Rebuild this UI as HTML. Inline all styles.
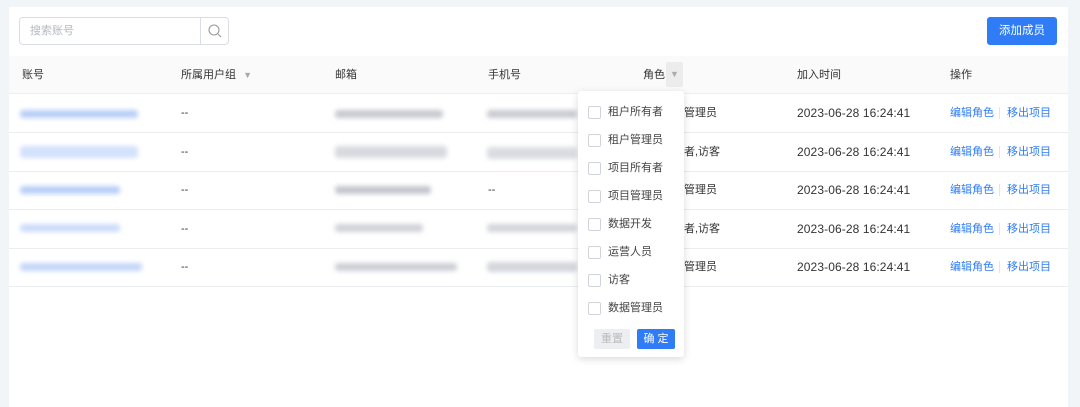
<!DOCTYPE html><html><head><meta charset="utf-8"><style>
*{margin:0;padding:0;box-sizing:border-box}
body{width:1080px;height:403px;background:#f2f5f8;font-family:"Liberation Sans","Noto Sans CJK SC",sans-serif;font-size:12px;color:#333;position:relative;overflow:hidden;line-height:16px}
.panel{position:absolute;left:9px;top:7px;width:1059px;height:400px;background:#fff}
.a{position:absolute}
.search{left:19px;top:17px;width:210px;height:28px;border:1px solid #d9dce3;border-radius:4px;color:#b5b8c0;padding:5px 10px;font-size:11px}
.search i{position:absolute;right:0;top:0;width:28px;height:26px;border-left:1px solid #d9dce3}
.btn{left:987px;top:17px;width:70px;height:28px;background:#2f7cf6;border-radius:3px;color:#fff;text-align:center;line-height:28px;font-size:11.5px}
.head{left:9px;top:56px;width:1059px;height:38px;background:#fafafa;border-bottom:1px solid #eee}
.h{position:absolute;top:67px;color:#333;font-size:11px;line-height:16px}
.row{left:9px;width:1059px;height:39px;border-bottom:1px solid #ebedf0}
.t{position:absolute;font-size:11px;color:#333;line-height:16px;white-space:nowrap}
.tm{font-size:12px;letter-spacing:0.1px}
.l{color:#2f7cf6}
.sep{position:absolute;width:1px;height:12px;background:#e3e5e8}
.bl{position:absolute;height:8px;filter:blur(2.5px);border-radius:3px}
.dd{left:578px;top:91px;width:106px;height:266px;background:#fff;box-shadow:0 2px 8px rgba(0,0,0,.15);border-radius:3px}
.cb{position:absolute;left:10px;width:13px;height:13px;border:1px solid #d0d3d9;border-radius:2px}
.ct{position:absolute;left:30px;font-size:11px;color:#444;line-height:14px}
</style></head><body>
<div class="panel"></div>
<div class="a search">搜索账号<i><svg width="28" height="26"><circle cx="13" cy="12" r="5" fill="none" stroke="#999" stroke-width="1.1"/><path d="M17 16l3 3" stroke="#999" stroke-width="1.1"/></svg></i></div>
<div class="a btn">添加成员</div>
<div class="a head"></div>
<div class="h" style="left:22px">账号</div>
<div class="h" style="left:181px">所属用户组 <span style="color:#aaa;font-size:9px;margin-left:4px">▼</span></div>
<div class="h" style="left:335px">邮箱</div>
<div class="h" style="left:488px">手机号</div>
<div class="h" style="left:643px">角色</div>
<div class="a" style="left:666px;top:62px;width:17px;height:25px;background:#ececec;border-radius:2px;color:#aaa;font-size:9px;text-align:center;line-height:25px">▼</div>
<div class="h" style="left:797px">加入时间</div>
<div class="h" style="left:950px">操作</div>

<div class="a row" style="top:94px"></div><div class="a row" style="top:133px"></div><div class="a row" style="top:171px"></div><div class="a row" style="top:210px"></div><div class="a row" style="top:248px"></div>

<div class="bl" style="left:20px;top:110px;width:118px;background:#b8cff8"></div>
<div class="bl" style="left:20px;top:146px;width:118px;height:12px;background:#d3e1fb"></div>
<div class="bl" style="left:20px;top:186px;width:100px;background:#b8cff8"></div>
<div class="bl" style="left:20px;top:224px;width:100px;background:#ccdcfa"></div>
<div class="bl" style="left:20px;top:263px;width:122px;background:#c3d6f9"></div>

<div class="t" style="left:181px;top:105px">--</div><div class="t" style="left:181px;top:144px">--</div><div class="t" style="left:181px;top:182px">--</div><div class="t" style="left:181px;top:221px">--</div><div class="t" style="left:181px;top:259px">--</div>

<div class="bl" style="left:335px;top:110px;width:108px;background:#c7c9d0"></div>
<div class="bl" style="left:335px;top:146px;width:112px;height:12px;background:#d8dae0"></div>
<div class="bl" style="left:335px;top:186px;width:96px;background:#c4c6cd"></div>
<div class="bl" style="left:335px;top:224px;width:88px;background:#d0d2d8"></div>
<div class="bl" style="left:335px;top:263px;width:122px;background:#cdcfd5"></div>

<div class="bl" style="left:487px;top:110px;width:90px;background:#c9cbd2"></div>
<div class="bl" style="left:487px;top:147px;width:90px;height:12px;background:#dadce2"></div>
<div class="t" style="left:488px;top:182px">--</div>
<div class="bl" style="left:487px;top:224px;width:90px;background:#d2d4da"></div>
<div class="bl" style="left:487px;top:262px;width:90px;height:10px;background:#d4d6dc"></div>

<div class="t" style="left:684px;top:105px">管理员</div><div class="t" style="left:684px;top:144px">者,访客</div><div class="t" style="left:684px;top:182px">管理员</div><div class="t" style="left:684px;top:221px">者,访客</div><div class="t" style="left:684px;top:259px">管理员</div>

<div class="t tm" style="left:797px;top:105px">2023-06-28 16:24:41</div>
<div class="t tm" style="left:797px;top:144px">2023-06-28 16:24:41</div>
<div class="t tm" style="left:797px;top:182px">2023-06-28 16:24:41</div>
<div class="t tm" style="left:797px;top:221px">2023-06-28 16:24:41</div>
<div class="t tm" style="left:797px;top:259px">2023-06-28 16:24:41</div>

<div class="t l" style="left:950px;top:105px">编辑角色</div><div class="sep" style="left:999px;top:107px"></div><div class="t l" style="left:1007px;top:105px">移出项目</div>
<div class="t l" style="left:950px;top:144px">编辑角色</div><div class="sep" style="left:999px;top:146px"></div><div class="t l" style="left:1007px;top:144px">移出项目</div>
<div class="t l" style="left:950px;top:182px">编辑角色</div><div class="sep" style="left:999px;top:184px"></div><div class="t l" style="left:1007px;top:182px">移出项目</div>
<div class="t l" style="left:950px;top:221px">编辑角色</div><div class="sep" style="left:999px;top:223px"></div><div class="t l" style="left:1007px;top:221px">移出项目</div>
<div class="t l" style="left:950px;top:259px">编辑角色</div><div class="sep" style="left:999px;top:261px"></div><div class="t l" style="left:1007px;top:259px">移出项目</div>

<div class="a dd">
<div class="cb" style="top:15px"></div><div class="ct" style="top:14px">租户所有者</div>
<div class="cb" style="top:43px"></div><div class="ct" style="top:42px">租户管理员</div>
<div class="cb" style="top:71px"></div><div class="ct" style="top:70px">项目所有者</div>
<div class="cb" style="top:99px"></div><div class="ct" style="top:98px">项目管理员</div>
<div class="cb" style="top:127px"></div><div class="ct" style="top:126px">数据开发</div>
<div class="cb" style="top:155px"></div><div class="ct" style="top:154px">运营人员</div>
<div class="cb" style="top:183px"></div><div class="ct" style="top:182px">访客</div>
<div class="cb" style="top:211px"></div><div class="ct" style="top:210px">数据管理员</div>
<div class="a" style="left:16px;top:238px;width:36px;height:20px;background:#eceef1;color:#bbb;font-size:11px;text-align:center;line-height:20px;border-radius:2px">重置</div>
<div class="a" style="left:59px;top:238px;width:38px;height:20px;background:#2f7cf6;color:#fff;font-size:11px;text-align:center;line-height:20px;border-radius:2px">确 定</div>
</div>
</body></html>
